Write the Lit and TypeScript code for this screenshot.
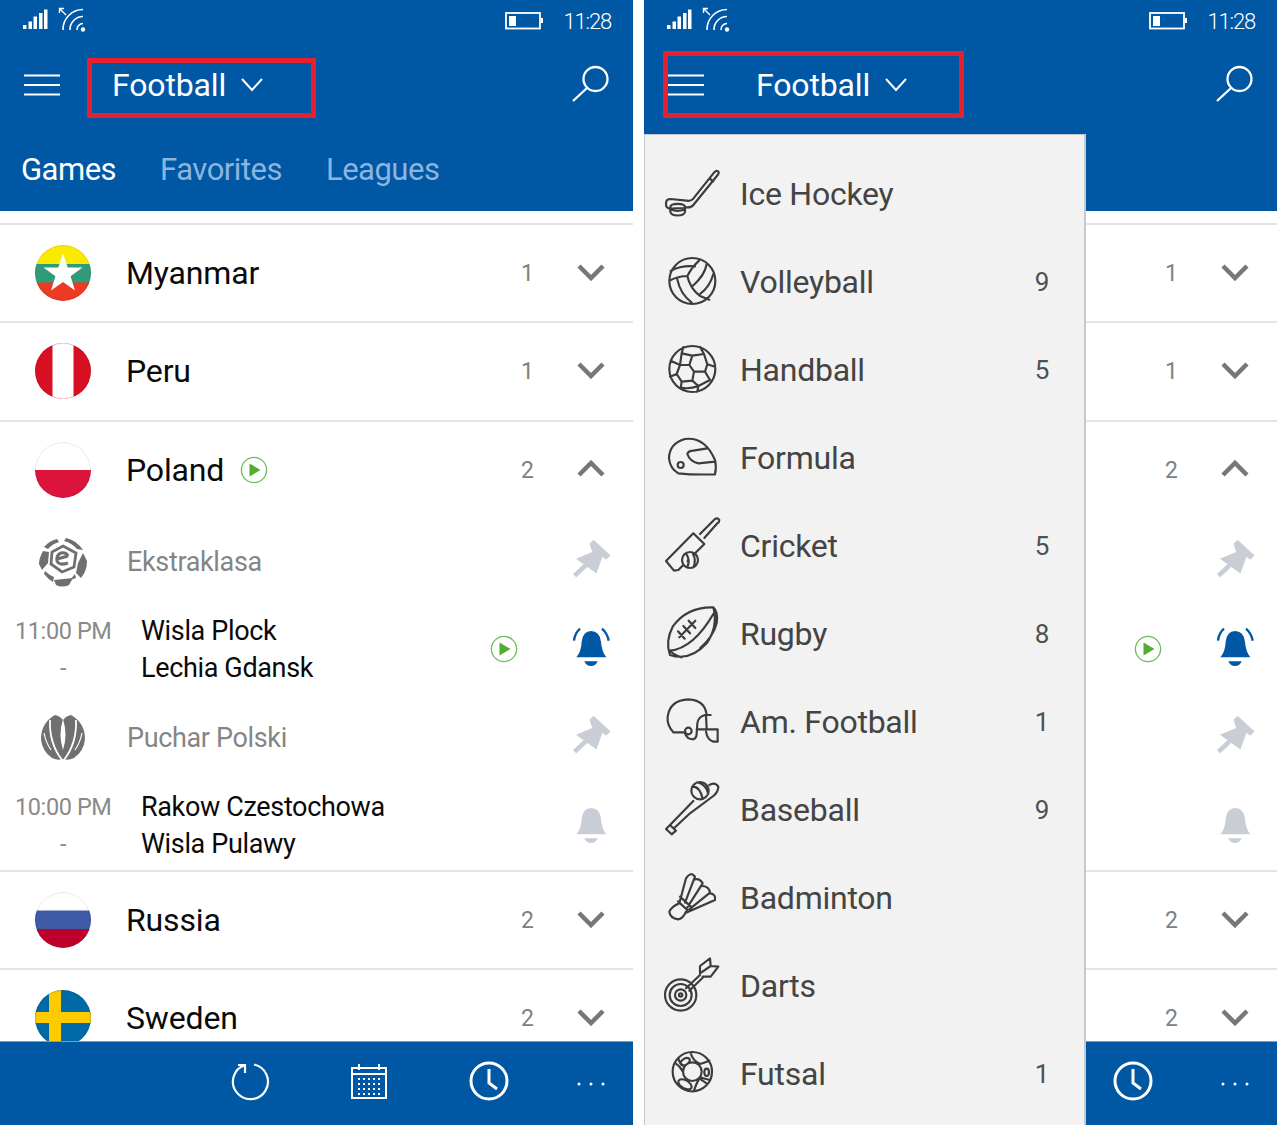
import { LitElement, html, css, svg, nothing } from "lit";
import { customElement, property } from "lit/decorators.js";

const chevron = (up = false) => html`<svg class="chev" viewBox="0 0 28 18"><path d=${up ? "M2 15L14 3L26 15" : "M2 3L14 15L26 3"}></path></svg>`;
const play = () => html`<svg class="play" viewBox="0 0 28 28"><circle cx="14" cy="14" r="12.6"></circle><path d="M9.5 7.5L20.5 14L9.5 20.5Z"></path></svg>`;
const pin = () => html`<svg class="pin" viewBox="332 58 130 130"><path d="M403 60L455 108L441 121L430 112L412 162L350 118L399 97L391 72Z"></path><path class="needle" d="M380 137L346 169"></path></svg>`;
const bell = (on: boolean) => html`<svg class=${on ? "bell on" : "bell"} viewBox="330 315 120 135">
  <path d="M390 333Q416 333 420 365Q422 394 436 412L346 412Q361 394 362 365Q366 333 390 333Z"></path>
  <path d="M370 424H410Q405 438 390 438Q375 438 370 424Z"></path>
  ${on ? svg`<path class="wave" d="M357 326Q341 340 339 362M423 326Q439 340 443 362"></path>` : nothing}
</svg>`;

const flags: Record<string, unknown> = {
  Myanmar: svg`<rect width="56" height="19" fill="#fbe900"></rect><rect y="19" width="56" height="19" fill="#2f9b78"></rect><rect y="37.5" width="56" height="19" fill="#ee3a23"></rect><path fill="#fff" d="M28 8.500L32.700 22.500L47.500 22.500L35.600 31.300L40 45.500L28 37L16 45.500L20.400 31.300L8.500 22.500L23.300 22.500Z"></path>`,
  Peru: svg`<rect width="56" height="56" fill="#d91023"></rect><rect x="17.500" width="21" height="56" fill="#fff"></rect>`,
  Poland: svg`<rect width="56" height="28" fill="#fff"></rect><rect y="28" width="56" height="28" fill="#dc143c"></rect>`,
  Russia: svg`<rect width="56" height="19" fill="#fff"></rect><rect y="18.500" width="56" height="19" fill="#3f5aa6"></rect><rect y="37" width="56" height="19" fill="#bd0029"></rect>`,
  Sweden: svg`<rect width="56" height="56" fill="#006aa7"></rect><rect x="14" width="12" height="56" fill="#fdcb00"></rect><rect y="22" width="56" height="11" fill="#fdcb00"></rect>`,
};
const flag = (n: string) => html`<svg class="flag" viewBox="0 0 56 56">${flags[n]}<circle cx="28" cy="28" r="27.500" class="rim"></circle></svg>`;

const ekstraklasa = html`<svg class="logo" viewBox="0 0 50 50"><g fill="#6f6f6f">
  <path d="M19 2Q11 4 6 10L10 12Q14 7 21 5Z"></path><path d="M28 1L26 4Q34 6 39 12L45 13Q38 3 28 1Z"></path>
  <path d="M5 14Q1 21 1 27L4 33L10 26L11 15Z"></path><path d="M45 16L49 24Q49 34 43 41L38 36L40 26Z"></path>
  <path d="M7 34L6 37Q10 42 15 45L16 40Q11 38 7 34Z"></path><path d="M37 37L32 43L38 41Z"></path>
  <path d="M16 43L35 41L31 48Q24 51 18 48Z"></path></g>
  <path d="M25 9L38 16L36 30L24 35L13 27L14 15Z" fill="none" stroke="#6f6f6f" stroke-width="2.800"></path>
  <path d="M19 22L30 19M30 19Q28 15 23 16Q18 18 19 24Q21 29 30 26" fill="none" stroke="#6f6f6f" stroke-width="3"></path>
</svg>`;
const puchar = html`<svg class="logo" viewBox="0 0 50 50"><path fill="#707070" d="M17 2Q22 3 25 7Q28 3 33 2Q47 10 47 26Q46 38 36 45Q30 48 25 46Q20 48 14 45Q4 38 3 26Q3 10 17 2Z"></path>
  <path d="M25 6Q20 22 25 37Q30 22 25 6Z" fill="#fff"></path>
  <path d="M12 7Q11 30 24 47M38 7Q39 30 26 47" fill="none" stroke="#fff" stroke-width="1.800"></path>
  <path d="M6 20Q8 30 13 37M44 20Q42 30 37 37" fill="none" stroke="#fff" stroke-width="1.200"></path>
</svg>`;

type Sport = { name: string; count?: number; dy: number; d: string; over?: string };
const sports: Sport[] = [
  { name: "Ice Hockey", dy: 0, d: "M192 68Q200 58 206 66Q207 70 203 75L130 165Q124 173 110 172L60 176Q47 174 48 160Q48 147 62 147L110 152Q122 154 128 148L192 68ZM178 85L190 94", over: "M61 172C61 158 105 158 105 172V186C101 200 65 200 61 186ZM61 172C61 186 105 186 105 172" },
  { name: "Volleyball", count: 9, dy: -264, d: "M58 393A69 69 0 1 0 196 393A69 69 0 1 0 58 393ZM62 362Q95 345 135 349M58 392Q85 378 112 378M112 378Q125 352 148 331M112 378Q120 415 150 438M82 388Q90 430 125 458M170 342Q165 375 128 408M190 372Q180 410 150 432M150 438L178 449" },
  { name: "Handball", count: 5, dy: -528, d: "M58 657A69 69 0 1 0 196 657A69 69 0 1 0 58 657ZM100 591L95 610L127 617L162 612L150 591M127 617L118 645L132 665L165 665L172 643L162 612M118 645L90 645L80 672L95 695L127 692L132 665M95 610L90 645M80 672L60 680M90 645L62 632M165 665L180 690M172 643L195 650M127 692L145 708L180 690M145 708L142 725M95 695L92 715M145 708Q120 718 92 713" },
  { name: "Formula", dy: -12, d: "M85 190Q60 175 57 145Q58 100 105 87Q165 80 195 150Q200 170 195 193Q130 195 85 190ZM195 155L145 160Q120 155 112 132Q115 122 130 122L172 115M83 165A9 9 0 1 0 101 165A9 9 0 1 0 83 165Z" },
  { name: "Cricket", count: 5, dy: -276, d: "M130 370L163 402L85 480L72 482L48 453ZM150 372L195 327Q203 322 208 330Q208 337 202 340L163 384", over: "M96 450A24 24 0 1 0 144 450A24 24 0 1 0 96 450ZM108 431Q122 450 112 471M128 428Q140 450 130 472" },
  { name: "Rugby", count: 8, dy: -540, d: "M190 592Q110 590 68 650Q45 695 60 735Q120 755 170 700Q205 650 190 592ZM190 592Q205 605 200 640Q190 680 150 715M60 722Q70 735 95 742M60 722Q130 715 190 612M88 682L136 632M84 664L104 686M100 648L120 670M116 632L136 654" },
  { name: "Am. Football", count: 1, dy: -24, d: "M70 187Q50 165 53 140Q60 90 115 88Q165 90 170 135M70 187L105 187M105 183A10 10 0 1 0 125 183A10 10 0 1 0 105 183ZM105 190Q110 208 130 208Q140 205 140 190L142 160Q145 140 165 135L182 135M168 135L170 178L203 178L203 215L190 215Q172 210 168 185M140 178L170 178" },
  { name: "Baseball", count: 9, dy: -288, d: "M178 345Q195 335 205 350Q205 365 190 378L120 430L72 475M130 393L60 465M48 477L60 465L78 482L65 493Z", over: "M124 362A26 26 0 1 0 176 362A26 26 0 1 0 124 362ZM128 350Q150 350 158 387M142 337Q170 345 175 372" },
  { name: "Badminton", dy: -552, d: "M88 700Q65 710 58 725Q60 745 85 748Q100 745 108 725M88 700L108 625Q122 603 135 620L105 698M135 628Q150 625 158 640L112 712M158 648Q178 650 180 668L118 718M180 670Q198 672 195 690L108 728M90 680L125 712M84 694L112 720" },
  { name: "Darts", dy: -36, d: "M45 195A47 47 0 1 0 139 195A47 47 0 1 0 45 195ZM59 195A33 33 0 1 0 125 195A33 33 0 1 0 59 195ZM75 195A17 17 0 1 0 109 195A17 17 0 1 0 75 195ZM87 195A5 5 0 1 0 97 195A5 5 0 1 0 87 195ZM108 175L150 135M118 182L158 143M150 130L150 108L180 85L182 108L205 110L182 140L158 140M150 130L182 108" },
  { name: "Futsal", count: 1, dy: -300, d: "M68 425A59 59 0 1 0 186 425A59 59 0 1 0 68 425ZM99 425A28 28 0 1 0 155 425A28 28 0 1 0 99 425ZM122 369Q128 392 150 402Q172 395 178 392M85 384Q88 402 102 408M74 398Q90 408 99 425M180 450Q160 445 150 442M132 482Q138 462 148 445Q170 460 172 462M95 405A10 6 -30 1 0 116 385A10 6 -30 1 0 95 405ZM163 427A7 11 0 1 0 177 427A7 11 0 1 0 163 427ZM94 470A11 6 30 1 0 116 456A11 6 30 1 0 94 470Z" },
];

@customElement("phone-screen")
class PhoneScreen extends LitElement {
  @property({ type: Boolean }) open = false;

  static styles = css`
    :host { display: block; width: 633px; height: 1125px; }
    .screen { position: relative; width: 633px; height: 1125px; overflow: hidden; display: flex; flex-direction: column; background: #fff; font-family: Roboto, "Liberation Sans", sans-serif; }
    .head { flex: none; height: 211px; background: #0057a4; color: #fff; display: flex; flex-direction: column; }
    .status { height: 44px; display: flex; align-items: center; padding: 0 22px 2px 23px; box-sizing: border-box; }
    .status svg { display: block; fill: #fff; stroke: #fff; }
    .sig { width: 26px; height: 24px; stroke: none !important; margin-top: 0; }
    .wifi { width: 30px; height: 28px; margin-left: 9px; margin-top: -2px; fill: none !important; }
    .bat { width: 38px; height: 20px; margin-left: auto; fill: none !important; }
    .clock { font-size: 22px; font-weight: 300; margin-left: 21px; letter-spacing: -1.200px; }
    .bar { height: 82px; display: flex; align-items: center; padding: 0 22px 0 24px; box-sizing: border-box; }
    .burger { width: 36px; height: 22px; stroke: #fff; stroke-width: 2; flex: none; }
    .title { display: flex; align-items: center; margin-left: 52px; font-size: 32px; line-height: 40px; letter-spacing: -0.150px; }
    .arrow { width: 22px; height: 16px; margin-left: 15px; fill: none; stroke: #fff; stroke-width: 2; }
    .search { width: 40px; height: 40px; margin-left: auto; margin-top: -2px; fill: none; stroke: #fff; stroke-width: 2.300; flex: none; }
    .tabs { display: flex; gap: 44px; padding: 0 0 0 21px; font-size: 31px; letter-spacing: -0.500px; line-height: 40px; margin-top: 24px; color: #8db4de; }
    .tabs .cur { color: #fff; }

    .list { flex: 1; min-height: 0; overflow: hidden; padding-top: 12px; }
    .row { height: 98px; box-sizing: border-box; border-top: 2px solid #e4e4e4; display: flex; align-items: center; }
    .row:nth-child(2) { height: 99px; padding-bottom: 1px; }
    .flag { width: 56px; height: 56px; margin-left: 35px; border-radius: 50%; flex: none; }
    .rim { fill: none; stroke: #000; stroke-opacity: .1; stroke-width: 1; }
    .name { margin-left: 35px; font-size: 32px; letter-spacing: -0.150px; color: #0a0a0a; display: flex; align-items: center; flex: 1; }
    .play { width: 28px; height: 28px; flex: none; }
    .play circle { fill: none; stroke: #6dbb5c; stroke-width: 1.300; }
    .play path { fill: #4fae2f; }
    .name .play { margin-left: 16px; }
    .count { width: 44px; padding-left: 1px; box-sizing: border-box; text-align: center; font-size: 23px; color: #808080; flex: none; }
    .act { width: 84px; display: flex; justify-content: center; flex: none; }
    .chev { width: 28px; height: 18px; margin-top: -2px; fill: none; stroke: #777; stroke-width: 4.500; }
    .league { height: 88px; display: flex; align-items: center; }
    .logo { width: 50px; height: 50px; margin-left: 38px; margin-top: -1px; flex: none; }
    .lname { margin-left: 39px; font-size: 27px; letter-spacing: -0.350px; color: #858585; flex: 1; }
    .pin { width: 43px; height: 43px; margin-top: -4px; fill: #c9ced6; }
    .needle { fill: none; stroke: #c9ced6; stroke-width: 14; }
    .bell { width: 40px; height: 45px; margin-top: -3px; fill: #c9ced6; }
    .bell.on { margin-top: -5px; fill: #0057a4; }
    .wave { fill: none; stroke: #0057a4; stroke-width: 7; }
    .match { height: 88px; display: flex; align-items: center; }
    .time { width: 96px; margin-left: 15px; text-align: center; font-size: 23.500px; letter-spacing: -0.400px; line-height: 37px; color: #8a8a8a; flex: none; white-space: nowrap; }
    .teams { margin-left: 30px; font-size: 27px; letter-spacing: -0.350px; line-height: 37px; color: #0a0a0a; flex: 1; }
    .pbox { width: 60px; display: flex; justify-content: center; flex: none; margin-right: 15px; margin-top: -3px; }

    .foot { flex: none; height: 84px; box-sizing: border-box; background: #0057a4; border-top: 1px solid #6f9fd0; padding-bottom: 3px; display: flex; justify-content: flex-end; align-items: center; }
    .fi { width: 120px; display: flex; justify-content: center; }
    .fi svg { width: 48px; height: 48px; fill: none; stroke: #fff; }
    .fi.more { width: 84px; }

    .menu { position: absolute; left: 0; top: 134px; bottom: 0; width: 442px; box-sizing: border-box; background: #f2f2f2; border: 1px solid #c4c9cf; border-right-width: 2px; border-bottom: none; padding-top: 15px; }
    .mi { height: 88px; display: flex; align-items: center; }
    .mi svg { width: 100px; height: 88px; margin-left: 5px; flex: none; fill: none; stroke: #3c3c3c; stroke-width: 6.500; stroke-linejoin: round; stroke-linecap: round; }
    .mi .over { fill: #f2f2f2; }
    .mn { margin-left: -10px; font-size: 32px; letter-spacing: -0.250px; color: #444; flex: 1; }
    .mc { width: 40px; margin-right: 22px; text-align: center; font-size: 26px; color: #505050; flex: none; }

    .mark { position: absolute; box-sizing: border-box; border: 5px solid #e81f2d; left: 87px; top: 58px; width: 229px; height: 60px; }
    .mark.wide { left: 19px; top: 51px; width: 301px; height: 67px; }
  `;

  private country(n: string, c: number, up = false, live = false) {
    return html`<div class="row">${flag(n)}<div class="name">${n}${live ? play() : nothing}</div><div class="count">${c}</div><div class="act">${chevron(up)}</div></div>`;
  }

  render() {
    return html`<div class="screen">
      <div class="head">
        <div class="status">
          <svg class="sig" viewBox="0 0 26 24"><rect x="0" y="16" width="3.500" height="4"></rect><rect x="5.500" y="12.500" width="3.500" height="7.500"></rect><rect x="10.500" y="7.500" width="3.500" height="12.500"></rect><rect x="16" y="4" width="3.500" height="16"></rect><rect x="21" y="0.500" width="3.500" height="19.500"></rect></svg>
          <svg class="wifi" viewBox="0 0 30 28"><path stroke-width="1.600" d="M5 24A20 20 0 0 1 25 3.500M12 24A13 13 0 0 1 25 10.500M19 24A6 6 0 0 1 25 17.500"></path><circle cx="25" cy="23.500" r="2.200" fill="#fff" stroke="none"></circle><path stroke-width="1.400" d="M8 9L2 3M1.500 7V2.500H6"></path></svg>
          <svg class="bat" viewBox="0 0 38 20"><rect x="1" y="2" width="34" height="15.500" stroke-width="1.800"></rect><rect x="4" y="5" width="7" height="10" fill="#fff" stroke="none"></rect><rect x="36" y="7" width="2" height="5" fill="#fff" stroke="none"></rect></svg>
          <span class="clock">11:28</span>
        </div>
        <div class="bar">
          <svg class="burger" viewBox="0 0 36 22"><path d="M0 1.500H36M0 11H36M0 20.500H36"></path></svg>
          <div class="title">Football<svg class="arrow" viewBox="0 0 22 16"><path d="M1 2L11 13L21 2"></path></svg></div>
          <svg class="search" viewBox="0 0 40 40"><circle cx="24.500" cy="15" r="12"></circle><path d="M16 24L2 37"></path></svg>
        </div>
        <div class="tabs"><span class="cur">Games</span><span>Favorites</span><span>Leagues</span></div>
      </div>

      <div class="list">
        ${this.country("Myanmar", 1)}
        ${this.country("Peru", 1)}
        ${this.country("Poland", 2, true, true)}
        <div class="league">${ekstraklasa}<div class="lname">Ekstraklasa</div><div class="act">${pin()}</div></div>
        <div class="match"><div class="time">11:00 PM<br />-</div><div class="teams">Wisla Plock<br />Lechia Gdansk</div><div class="pbox">${play()}</div><div class="act">${bell(true)}</div></div>
        <div class="league">${puchar}<div class="lname">Puchar Polski</div><div class="act">${pin()}</div></div>
        <div class="match"><div class="time">10:00 PM<br />-</div><div class="teams">Rakow Czestochowa<br />Wisla Pulawy</div><div class="act">${bell(false)}</div></div>
        ${this.country("Russia", 2)}
        ${this.country("Sweden", 2)}
      </div>

      <div class="foot">
        <div class="fi"><svg viewBox="0 0 48 48" stroke-width="2.200"><path d="M29 6.500A17.500 17.500 0 1 1 20 7"></path><path d="M13 7H20V15"></path></svg></div>
        <div class="fi"><svg viewBox="0 0 48 48" stroke-width="2"><path d="M7 10H41V40H7ZM7 16H41M14 6V12M34 6V12"></path><path d="M13 21H35M13 26H35M13 31H35M13 36H35" stroke-width="2.200" stroke-dasharray="2 3"></path></svg></div>
        <div class="fi"><svg viewBox="0 0 48 48" stroke-width="3"><circle cx="24" cy="23" r="18"></circle><path d="M24 11V25L32 31"></path></svg></div>
        <div class="fi more"><svg viewBox="0 0 48 48" stroke="none"><circle cx="12" cy="26" r="1.500" fill="#fff" stroke="none"></circle><circle cx="24" cy="26" r="1.500" fill="#fff" stroke="none"></circle><circle cx="36" cy="26" r="1.500" fill="#fff" stroke="none"></circle></svg></div>
      </div>

      ${this.open ? html`<div class="menu">
        ${sports.map((s) => html`<div class="mi"><svg viewBox="0 0 300 264"><g transform="translate(0 ${s.dy})"><path d=${s.d}></path>${s.over ? svg`<path class="over" d=${s.over}></path>` : nothing}</g></svg><div class="mn">${s.name}</div><div class="mc">${s.count ?? ""}</div></div>`)}
      </div>` : nothing}
      <div class=${this.open ? "mark wide" : "mark"}></div>
    </div>`;
  }
}

@customElement("app-root")
export class AppRoot extends LitElement {
  static styles = css`
    :host { display: flex; gap: 11px; width: 1280px; height: 1125px; background: #fff; overflow: hidden; }
  `;
  render() {
    return html`<phone-screen></phone-screen><phone-screen open></phone-screen>`;
  }
}
void PhoneScreen;
